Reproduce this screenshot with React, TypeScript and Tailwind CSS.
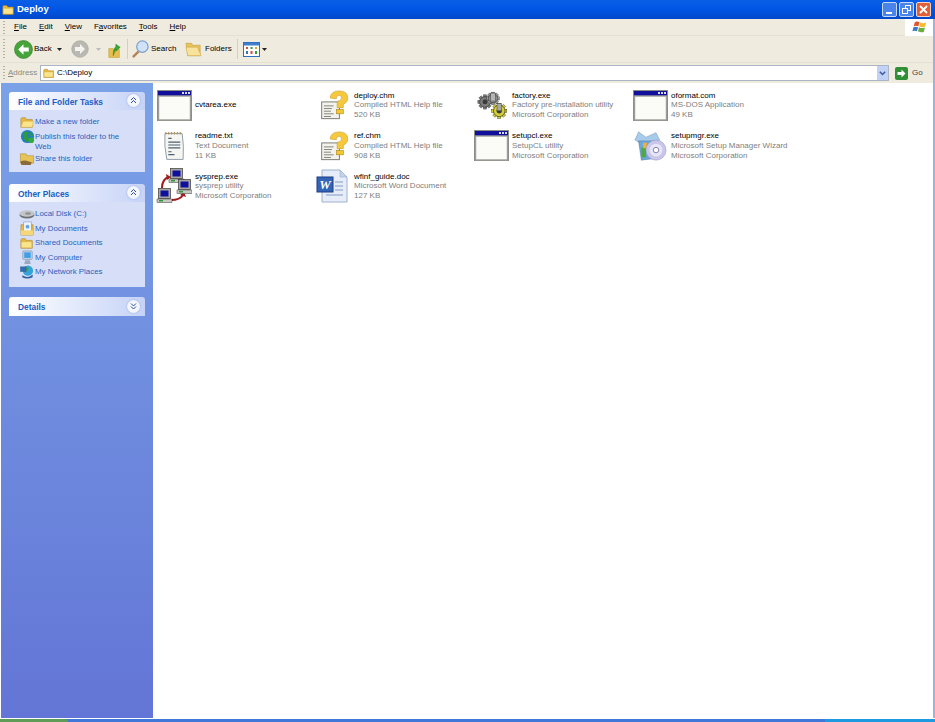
const font = "font-['Liberation_Sans',sans-serif]";

const Grip = ({ h }: { h: string }) => (
  <div className={`w-[2px] ${h} ml-[3px] mr-[3px] shrink-0 bg-[repeating-linear-gradient(to_bottom,#b5b2a2_0,#b5b2a2_1px,transparent_1px,transparent_3px)]`} />
);

const Folder = ({ s = 16, open = false }: { s?: number; open?: boolean }) => (
  <svg width={s} height={s} viewBox="0 0 16 16">
    <path d="M1 4 L1 14 L14 14 L14 5 L7 5 L6 3 L2 3 Z" fill="#e8b93e" stroke="#a67c1c" strokeWidth=".6" />
    <path d={open ? "M1 14 L3.5 7 L15.5 7 L14 14 Z" : "M1.5 6.5 H13.5 V13.5 H1.5 Z"} fill="#fbe58c" stroke="#c79a2c" strokeWidth=".4" />
  </svg>
);

const Chevron = ({ down = false }: { down?: boolean }) => (
  <div className={`w-[13px] h-[13px] ${down ? "" : "mb-[2px]"} rounded-full bg-[#f4f6fd] shadow-[0_0_2px_#8ea4e0] flex items-center justify-center`}>
    <svg width="9" height="9" viewBox="0 0 9 9" fill="none" stroke="#2f4f9f" strokeWidth="1">
      {down ? <path d="M2 1.5 L4.5 4 L7 1.5 M2 4.5 L4.5 7 L7 4.5" /> : <path d="M2 4 L4.5 1.5 L7 4 M2 7 L4.5 4.5 L7 7" />}
    </svg>
  </div>
);

const PanelHead = ({ title, down }: { title: string; down?: boolean }) => (
  <div className={`${down ? "h-[19px]" : "h-[18px]"} rounded-t-[3px] bg-gradient-to-r from-white to-[#c6d3f7] flex items-center justify-between pl-[9px] pr-[5px]`}>
    <span className="pt-[2px] text-[8.4px] font-bold text-[#215dc6]">{title}</span>
    <Chevron down={down} />
  </div>
);

const TaskLink = ({ icon, children }: { icon: React.ReactNode; children: React.ReactNode }) => (
  <div className="flex items-start text-[7.9px] leading-[10px] text-[#2a5fc0]">
    <div className="w-[16px] h-[14.5px] shrink-0 flex items-center justify-center">{icon}</div>
    <span className="pt-[2px]">{children}</span>
  </div>
);

const Globe = () => (
  <svg width="15" height="15" viewBox="0 0 16 16">
    <circle cx="8" cy="8" r="7" fill="#1f7fc2" />
    <path d="M3 4 Q7 2 9 4 L8 8 L10 11 L7 14 L4 10 Z M11 3 L14 7 L11 8 Z" fill="#2f9a3a" />
    <circle cx="12" cy="12" r="3" fill="#36a83c" />
  </svg>
);
const Disk = () => (
  <svg width="16" height="10" viewBox="0 0 16 10">
    <ellipse cx="8" cy="6" rx="7.5" ry="3.4" fill="#6b6f72" />
    <ellipse cx="8" cy="4.5" rx="7.5" ry="3.2" fill="#c3c6c8" />
    <ellipse cx="9" cy="4.5" rx="3" ry="1.2" fill="#8e9296" />
  </svg>
);
const Docs = () => (
  <svg width="15" height="15" viewBox="0 0 16 16">
    <path d="M1 4 L1 15 L14 15 L14 4 Z" fill="#eabd49" stroke="#a67c1c" strokeWidth=".6" />
    <rect x="4" y="1" width="8" height="11" fill="#eef4ff" stroke="#7d93bb" strokeWidth=".6" />
    <circle cx="8" cy="6" r="2" fill="#67a3e2" />
    <path d="M1 10 H14 V15 H1Z" fill="#f5d777" />
  </svg>
);
const Computer = () => (
  <svg width="13" height="15" viewBox="0 0 13 16">
    <rect x="1.5" y="1" width="10" height="9" rx="1" fill="#c9d4e6" stroke="#6880a5" strokeWidth=".6" />
    <rect x="3" y="2.5" width="7" height="6" fill="#3fa0e6" />
    <path d="M4 11 H9 L10 15 H3 Z" fill="#9aa9c1" />
  </svg>
);
const NetPlaces = () => (
  <svg width="16" height="15" viewBox="0 0 16 16">
    <circle cx="9" cy="6" r="5.5" fill="#34a4d8" />
    <path d="M6 2 L10 3 L8 7 L5 6Z" fill="#3da548" />
    <rect x="1" y="2" width="6" height="5" fill="#2f6fb7" stroke="#355a8c" strokeWidth=".5" />
    <path d="M3 11 Q9 15 14 10 L14 13 Q8 16 3 13Z" fill="#2b5a9e" />
  </svg>
);
const ShareFolder = () => (
  <svg width="16" height="15" viewBox="0 0 16 16">
    <path d="M1 3 H7 L8 5 H15 V13 H1Z" fill="#e8c456" stroke="#a67c1c" strokeWidth=".5" />
    <path d="M1 11 Q6 9 9 11 L13 12 L12 15 H2Z" fill="#8b6a3a" />
  </svg>
);

const AppWindow = () => (
  <svg width="35" height="31" viewBox="0 0 35 31">
    <rect x="0.5" y="0.5" width="34" height="30" fill="#fbfbf8" stroke="#8a8a86" />
    <rect x="1" y="1" width="33" height="5" fill="#10109c" />
    <rect x="25" y="2" width="2" height="2" fill="#d8d8e8" />
    <rect x="28" y="2" width="2" height="2" fill="#d8d8e8" />
    <rect x="31" y="2" width="2" height="2" fill="#d8d8e8" />
    <rect x="1.5" y="6" width="32" height="24" fill="none" stroke="#9d9d98" strokeWidth="1.4" />
  </svg>
);

const Notepad = () => (
  <svg width="23" height="32" viewBox="0 0 24 32">
    <path d="M2 3 H20 Q22 16 21 30 H4 Q1 16 2 3Z" fill="#f5f6f2" stroke="#8e9aa8" />
    <path d="M3 1.5 V4 M6 1.5 V4 M9 1.5 V4 M12 1.5 V4 M15 1.5 V4 M18 1.5 V4" stroke="#b3935a" strokeWidth="1.3" />
    <path d="M5.5 8 H9 M5.5 12 H18 M5.5 15 H18 M5.5 18 H18 M5.5 22 H9 M5.5 25 H12" stroke="#4f5f70" strokeWidth="1.2" />
  </svg>
);

const HelpFile = () => (
  <svg width="29" height="30" viewBox="0 0 32 34" className="ml-[3px]">
    <rect x="1.5" y="13.5" width="20" height="19" fill="#f3f2ec" stroke="#6e6e68" />
    <path d="M4 18 H15 M4 21 H13 M4 24 H12 M4 27 H15 M4 30 H12" stroke="#77776f" />
    <path d="M11 9 Q12 1 21 1 Q31 1 31 9 Q31 14 26 16 L26 20 L19 20 L19 13 Q24 12 24 9 Q24 6 21 6 Q18 6 18 10 Z" fill="#f6c93d" stroke="#c3941a" strokeWidth=".6" />
    <rect x="18" y="22" width="8" height="5" fill="#f4c832" stroke="#a47d12" strokeWidth=".6" />
  </svg>
);

const Gear = ({ x, y, r, fill, stroke }: { x: number; y: number; r: number; fill: string; stroke: string }) => (
  <g transform={`translate(${x} ${y})`}>
    {[0, 45, 90, 135].map((a) => (
      <rect key={a} x={-r - 2} y={-1.8} width={2 * r + 4} height={3.6} fill={fill} stroke={stroke} strokeWidth=".5" transform={`rotate(${a})`} />
    ))}
    <circle r={r} fill={fill} stroke={stroke} strokeWidth=".8" />
    <circle r={r * 0.45} fill="#3a3a3a" />
  </g>
);
const Gears = () => (
  <svg width="32" height="31" viewBox="0 0 36 32" className="ml-[3px]">
    <Gear x={9} y={12} r={6} fill="#7c7c7c" stroke="#3a3a3a" />
    <Gear x={18} y={8} r={5} fill="#9a9a9a" stroke="#3a3a3a" />
    <Gear x={25} y={22} r={6.5} fill="#d4ce3c" stroke="#3c3c10" />
    <rect x="15.5" y="2" width="5" height="9" fill="#b4b4b4" stroke="#333" strokeWidth=".5" />
    <rect x="22.5" y="14" width="5" height="8" fill="#a8a8a8" stroke="#333" strokeWidth=".5" />
  </svg>
);

const Setup = () => (
  <svg width="33" height="35" viewBox="0 0 36 34">
    <path d="M1 11 L5 2 L13 8 L24 3 L28 11 L24 14 H6 Z" fill="#a7cbea" stroke="#6b8db0" strokeWidth=".5" />
    <path d="M5 12 H24 V31 L8 33 Z" fill="#6ea8da" stroke="#4a6f96" strokeWidth=".5" />
    <rect x="8" y="19" width="5" height="11" fill="#4ca944" />
    <rect x="10" y="14" width="4" height="6" fill="#e9b33c" />
    <circle cx="24" cy="22" r="11" fill="#c9c6ea" stroke="#8f8cc2" strokeWidth=".5" />
    <circle cx="24" cy="22" r="7" fill="#e8e6f6" />
    <circle cx="24" cy="22" r="3" fill="#ffffff" stroke="#7b78ae" />
  </svg>
);

const Pc = ({ x, y }: { x: number; y: number }) => (
  <g transform={`translate(${x} ${y})`}>
    <rect x="0.5" y="0.5" width="12" height="10" fill="#a7a7a2" stroke="#3a3a3a" strokeWidth=".7" />
    <rect x="2.5" y="2.5" width="8" height="6" fill="#10109c" />
    <rect x="-1" y="11" width="15" height="3.5" fill="#c8c8c2" stroke="#3a3a3a" strokeWidth=".5" />
    <rect x="1" y="12" width="4" height="1.5" fill="#2f9a3a" />
  </g>
);
const Sysprep = () => (
  <svg width="36" height="36" viewBox="0 0 36 36">
    <path d="M6 20 Q6 11 13 9 M15 32 Q24 32 27 27" fill="none" stroke="#a01c1c" strokeWidth="2" />
    <path d="M10 6 L15 9 L11 12 Z M24 27 L28 24 L30 29 Z" fill="#a01c1c" />
    <Pc x={14} y={0} />
    <Pc x={22} y={11} />
    <Pc x={2} y={20} />
  </svg>
);

const WordDoc = () => (
  <svg width="34" height="34" viewBox="0 0 34 34">
    <path d="M6 1 H24 L31 8 V33 H6 Z" fill="#e7edf8" stroke="#9cb0d0" />
    <path d="M24 1 V8 H31 Z" fill="#c5d2ea" stroke="#9cb0d0" strokeWidth=".6" />
    <path d="M19 13 H27 M19 17 H27 M19 21 H27 M10 26 H27" stroke="#b4c4de" strokeWidth="2" />
    <rect x="1" y="8" width="16" height="15" fill="#3464b8" stroke="#1d3d80" />
    <text x="9" y="20" textAnchor="middle" fontSize="13" fontWeight="700" fontStyle="italic" fill="#fff" fontFamily="Liberation Serif">W</text>
  </svg>
);

const files: { icon: React.ReactNode; name: string; l1?: string; l2?: string }[] = [
  { icon: <AppWindow />, name: "cvtarea.exe" },
  { icon: <HelpFile />, name: "deploy.chm", l1: "Compiled HTML Help file", l2: "520 KB" },
  { icon: <Gears />, name: "factory.exe", l1: "Factory pre-installation utility", l2: "Microsoft Corporation" },
  { icon: <AppWindow />, name: "oformat.com", l1: "MS-DOS Application", l2: "49 KB" },
  { icon: <Notepad />, name: "readme.txt", l1: "Text Document", l2: "11 KB" },
  { icon: <HelpFile />, name: "ref.chm", l1: "Compiled HTML Help file", l2: "908 KB" },
  { icon: <AppWindow />, name: "setupcl.exe", l1: "SetupCL utility", l2: "Microsoft Corporation" },
  { icon: <Setup />, name: "setupmgr.exe", l1: "Microsoft Setup Manager Wizard", l2: "Microsoft Corporation" },
  { icon: <Sysprep />, name: "sysprep.exe", l1: "sysprep utility", l2: "Microsoft Corporation" },
  { icon: <WordDoc />, name: "wfinf_guide.doc", l1: "Microsoft Word Document", l2: "127 KB" },
];

const FileItem = ({ icon, name, l1, l2 }: (typeof files)[number]) => (
  <div className="flex items-center h-[40.5px]">
    <div className="w-[36px] h-[36px] shrink-0 flex items-center justify-center">{icon}</div>
    <div className="ml-[3px] text-[8px] leading-[9.7px] whitespace-nowrap">
      <div className="text-black">{name}</div>
      {l1 && <div className="text-[#808080]">{l1}</div>}
      {l2 && <div className="text-[#808080]">{l2}</div>}
    </div>
  </div>
);

export default function App() {
  return (
    <div className={`w-[935px] h-[722px] overflow-hidden flex flex-col bg-white ${font}`}>
      {/* title bar */}
      <div className="h-[19px] shrink-0 bg-gradient-to-b from-[#0a5fe6] via-[#0055e5] to-[#0048c8] flex items-center pl-[2px] pr-[4px]">
        <Folder s={13} />
        <span className="ml-[2px] text-white font-bold text-[9.5px]">Deploy</span>
        <div className="ml-auto flex gap-[2px]">
          <div className="w-[15px] h-[15px] rounded-[2px] bg-[#4a84e8] border border-[#c8d8f8] flex items-end pl-[3px] pb-[2px]">
            <div className="w-[6px] h-[2px] bg-white" />
          </div>
          <div className="w-[15px] h-[15px] rounded-[2px] bg-[#4a84e8] border border-[#c8d8f8] relative">
            <div className="absolute left-[5px] top-[2px] w-[6px] h-[6px] border border-white" />
            <div className="absolute left-[2px] top-[5px] w-[6px] h-[6px] border border-white bg-[#4a84e8]" />
          </div>
          <div className="w-[15px] h-[15px] rounded-[2px] bg-[#e0603a] border border-[#f4d4c8] flex items-center justify-center">
            <svg width="9" height="9" viewBox="0 0 9 9" stroke="#fff" strokeWidth="1.8"><path d="M1 1 L8 8 M8 1 L1 8" /></svg>
          </div>
        </div>
      </div>

      <div className="flex-1 min-h-0 flex flex-col border-r-2 border-[#9fb2dc]">
        {/* menu bar */}
        <div className="h-[17px] shrink-0 bg-[#efecdf] flex items-center border-b border-[#e4e1d2]">
          <Grip h="h-[13px]" />
          <div className="flex gap-[12px] ml-[6px] text-[8px] text-black">
            <span><u>F</u>ile</span>
            <span><u>E</u>dit</span>
            <span><u>V</u>iew</span>
            <span>F<u>a</u>vorites</span>
            <span><u>T</u>ools</span>
            <span><u>H</u>elp</span>
          </div>
          <div className="ml-auto w-[28px] h-[17px] bg-white flex items-center justify-center">
            <svg width="15" height="14" viewBox="0 0 16 14">
              <path d="M3 2 Q5 0 8 2 L6.8 6.2 Q4 5 1.8 6.2Z" fill="#e2542c" />
              <path d="M9 2 Q12 4 15 2 L14 6.5 Q11 8 7.8 6.2Z" fill="#f0bc2e" />
              <path d="M1.5 7.2 Q4 6 6.5 7.2 L5.3 11.5 Q3 10.5 .5 11.5Z" fill="#3f77c8" />
              <path d="M7.5 7.2 Q10 9 13.7 7.5 L12.7 12 Q10 13.5 6.3 11.5Z" fill="#6cae3c" />
            </svg>
          </div>
        </div>

        {/* toolbar */}
        <div className="h-[27px] shrink-0 bg-[#efecdf] flex items-center border-b border-[#e4e1d2]">
          <Grip h="h-[20px]" />
          <div className="flex items-center ml-[6px] text-[8px] text-black">
            <svg width="19" height="19" viewBox="0 0 18 18">
              <circle cx="9" cy="9" r="8.5" fill="#45a53a" stroke="#2a7a24" strokeWidth=".6" />
              <path d="M9 4 L4 9 L9 14 V11 H14 V7 H9 Z" fill="#fff" />
            </svg>
            <span className="ml-[1px] w-[18px]">Back</span>
            <svg className="ml-[5px]" width="5" height="3" viewBox="0 0 5 3"><path d="M0 0 H5 L2.5 3Z" fill="#222" /></svg>
            <svg className="ml-[9px]" width="18" height="18" viewBox="0 0 18 18">
              <circle cx="9" cy="9" r="8.3" fill="#b9b8b2" stroke="#a2a19b" strokeWidth=".6" />
              <path d="M9 4 L14 9 L9 14 V11 H4 V7 H9 Z" fill="#f4f3ee" />
            </svg>
            <svg className="ml-[7px]" width="5" height="3" viewBox="0 0 5 3"><path d="M0 0 H5 L2.5 3Z" fill="#bbb" /></svg>
            <svg className="ml-[6px]" width="15" height="19" viewBox="0 0 17 20">
              <path d="M2 9 H7 L8 10 H14 V19 H2Z" fill="#e8bf4e" stroke="#b18a24" strokeWidth=".5" />
              <path d="M7 17 Q7 9 10 7 V4 L15 7.5 L10 12 V9.5 Q9 12 7 17Z" fill="#3ba535" stroke="#24771f" strokeWidth=".5" />
            </svg>
            <div className="w-px h-[20px] bg-[#d3d0be] ml-[5px]" />
            <svg className="ml-[3px]" width="19" height="19" viewBox="0 0 20 20">
              <path d="M8 12 L2 18" stroke="#b5835a" strokeWidth="2.6" />
              <circle cx="12" cy="7" r="6" fill="#cfe2f7" stroke="#7da1cc" strokeWidth="1.3" />
            </svg>
            <span className="ml-[1px] w-[26px]">Search</span>
            <svg className="ml-[8px]" width="19" height="17" viewBox="0 0 20 17">
              <path d="M1 2 H7 L8 4 H16 V15 H3Z" fill="#e8c45a" stroke="#b58e2c" strokeWidth=".5" />
              <path d="M3 15 L1 6 H13 L17 15Z" fill="#f9e39c" stroke="#c59f3c" strokeWidth=".5" />
            </svg>
            <span className="ml-[1px] w-[26px]">Folders</span>
            <div className="w-px h-[20px] bg-[#d3d0be] ml-[6px]" />
            <svg className="ml-[5px]" width="17" height="15" viewBox="0 0 17 15">
              <rect x=".5" y=".5" width="16" height="14" fill="#fff" stroke="#2f6fc0" />
              <rect x="1" y="1" width="15" height="2.5" fill="#3f7fcc" />
              <rect x="3" y="5" width="2" height="2" fill="#d24c3a" />
              <rect x="7.5" y="5" width="2" height="2" fill="#3a9a3a" />
              <rect x="12" y="5" width="2" height="2" fill="#d9a52c" />
              <rect x="3" y="9" width="2" height="3" fill="#3f6fc0" />
              <rect x="7.5" y="9" width="2" height="3" fill="#d24c3a" />
              <rect x="12" y="9" width="2" height="3" fill="#3a9a3a" />
            </svg>
            <svg className="ml-[2px]" width="5" height="3" viewBox="0 0 5 3"><path d="M0 0 H5 L2.5 3Z" fill="#222" /></svg>
          </div>
        </div>

        {/* address bar */}
        <div className="h-[20px] shrink-0 bg-[#efecdf] flex items-center">
          <Grip h="h-[14px]" />
          <span className="w-[32px] text-[8px] text-[#8c8a80]"><u>A</u>ddress</span>
          <div className="flex-1 h-[16px] bg-white border border-[#a9b4c4] flex items-center pl-[2px]">
            <Folder s={12} />
            <span className="ml-[2px] text-[8px] text-black">C:\Deploy</span>
            <div className="ml-auto w-[11px] h-[14px] bg-[#c2d2f6] flex items-center justify-center">
              <svg width="7" height="5" viewBox="0 0 7 5" fill="none" stroke="#3d5a9e" strokeWidth="1.5"><path d="M.8 .8 L3.5 3.5 L6.2 .8" /></svg>
            </div>
          </div>
          <div className="ml-[6px] w-[13px] h-[13px] rounded-[2px] bg-[#2f8f35] flex items-center justify-center">
            <svg width="9" height="9" viewBox="0 0 9 9"><path d="M4.5 .5 L8.5 4.5 L4.5 8.5 V6 H.5 V3 H4.5Z" fill="#fff" /></svg>
          </div>
          <span className="ml-[4px] w-[10px] mr-[11px] text-[8px] text-[#444]">Go</span>
        </div>

        {/* main */}
        <div className="flex-1 min-h-0 flex pl-[1px]">
          <div className="w-[152px] shrink-0 bg-gradient-to-b from-[#7ba2e7] to-[#6375d6] px-[8px] pt-[9px] flex flex-col gap-[12px]">
            <div>
              <PanelHead title="File and Folder Tasks" />
              <div className="h-[62px] bg-[#d6dff7] pl-[10px] pr-[6px] pt-[5px] flex flex-col">
                <TaskLink icon={<Folder s={14} open />}>Make a new folder</TaskLink>
                <TaskLink icon={<Globe />}>
                  Publish this folder to the
                  <br />
                  Web
                </TaskLink>
                <TaskLink icon={<ShareFolder />}>Share this folder</TaskLink>
              </div>
            </div>
            <div>
              <PanelHead title="Other Places" />
              <div className="h-[85px] bg-[#d6dff7] pl-[10px] pr-[6px] pt-[5px] flex flex-col">
                <TaskLink icon={<Disk />}>Local Disk (C:)</TaskLink>
                <TaskLink icon={<Docs />}>My Documents</TaskLink>
                <TaskLink icon={<Folder s={14} />}>Shared Documents</TaskLink>
                <TaskLink icon={<Computer />}>My Computer</TaskLink>
                <TaskLink icon={<NetPlaces />}>My Network Places</TaskLink>
              </div>
            </div>
            <div className="-mt-[2px]">
              <PanelHead title="Details" down />
            </div>
          </div>
          <div className="flex-1 pl-[3px] pt-[2px] bg-white">
            <div className="grid grid-cols-[159px_158px_159px_159px] auto-rows-[40.5px]">
              {files.map((f) => (
                <FileItem key={f.name} {...f} />
              ))}
            </div>
          </div>
        </div>
      </div>

      {/* taskbar edge */}
      <div className="h-[4px] shrink-0 flex bg-[#3f78d8] border-t border-[#fff]">
        <div className="w-[68px] bg-[#5f9c58] rounded-tr-[3px]" />
        <div className="flex-1" />
        <div className="w-[110px] bg-[#1e9ae0]" />
      </div>
    </div>
  );
}
